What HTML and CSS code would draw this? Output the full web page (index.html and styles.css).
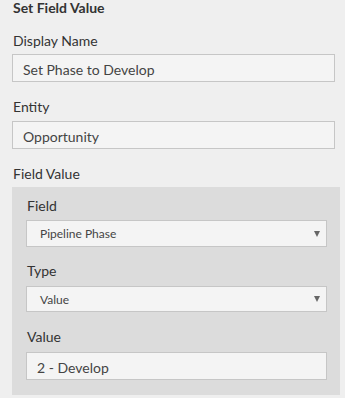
FILE: index.html
```html
<!DOCTYPE html>
<html lang="en">
<head>
    <meta charset="UTF-8">
    <title>Set Field Value</title>
    <link rel="stylesheet" href="styles.css">
</head>
<body>
    <div class="form">
        <h1 class="form-title">Set Field Value</h1>

        <!-- Display Name -->
        <div class="field">
            <label class="field-label">Display Name</label>
            <div class="text-box">Set Phase to Develop</div>
        </div>

        <!-- Entity -->
        <div class="field">
            <label class="field-label">Entity</label>
            <div class="text-box">Opportunity</div>
        </div>

        <!-- Field Value group -->
        <div class="field">
            <label class="field-label">Field Value</label>
            <div class="group">
                <div class="field">
                    <label class="field-label">Field</label>
                    <div class="select-box">
                        <span>Pipeline Phase</span>
                        <span class="caret"></span>
                    </div>
                </div>
                <div class="field">
                    <label class="field-label">Type</label>
                    <div class="select-box select-box-short">
                        <span>Value</span>
                        <span class="caret"></span>
                    </div>
                </div>
                <div class="field">
                    <label class="field-label">Value</label>
                    <div class="text-box">2 - Develop</div>
                </div>
            </div>
        </div>
    </div>
</body>
</html>
```

FILE: styles.css
```css
/* Reset */
* {
    margin: 0;
    padding: 0;
    box-sizing: border-box;
}

body {
    font-family: 'Lato', 'Liberation Sans', sans-serif;
    color: #333;
    background-color: #efefef;
}

/* Form */
.form {
    padding: 0 10px 0 12px;
}

.form-title {
    font-size: 14px;
    font-weight: 700;
    line-height: 16px;
    padding-left: 1px;
    color: #333;
}

.field {
    margin-top: 15px;
}

.field-label {
    display: block;
    font-size: 14px;
    line-height: 20px;
    padding-left: 1px;
    margin-bottom: 4px;
    color: #333;
}

.form > .field:first-of-type .field-label,
.form > .field:last-child > .field-label {
    margin-bottom: 3px;
}

/* Text boxes */
.text-box {
    height: 28px;
    line-height: 26px;
    padding: 2px 0 0 10px;
    font-size: 14px;
    color: #444;
    background: #f4f4f4;
    border: 1px solid #c6c6c6;
}

/* Nested group */
.group {
    background: #dcdcdc;
    margin-right: -5px;
    padding: 9px 13px 15px 14px;
}

.group .field {
    margin-top: 15px;
}

.group .field:first-child {
    margin-top: 0;
}

.group .field:nth-child(2) {
    margin-top: 14px;
}

.group .field:nth-child(n+2) .field-label {
    margin-bottom: 5px;
}

/* Select boxes */
.select-box {
    display: flex;
    align-items: center;
    justify-content: space-between;
    height: 27px;
    padding: 0 6px 0 13px;
    font-size: 12px;
    color: #444;
    background: #f4f4f4;
    border: 1px solid #c6c6c6;
}

.select-box-short {
    height: 26px;
}

.caret {
    width: 0;
    height: 0;
    border-left: 3px solid transparent;
    border-right: 3px solid transparent;
    border-top: 6px solid #666;
}
```
